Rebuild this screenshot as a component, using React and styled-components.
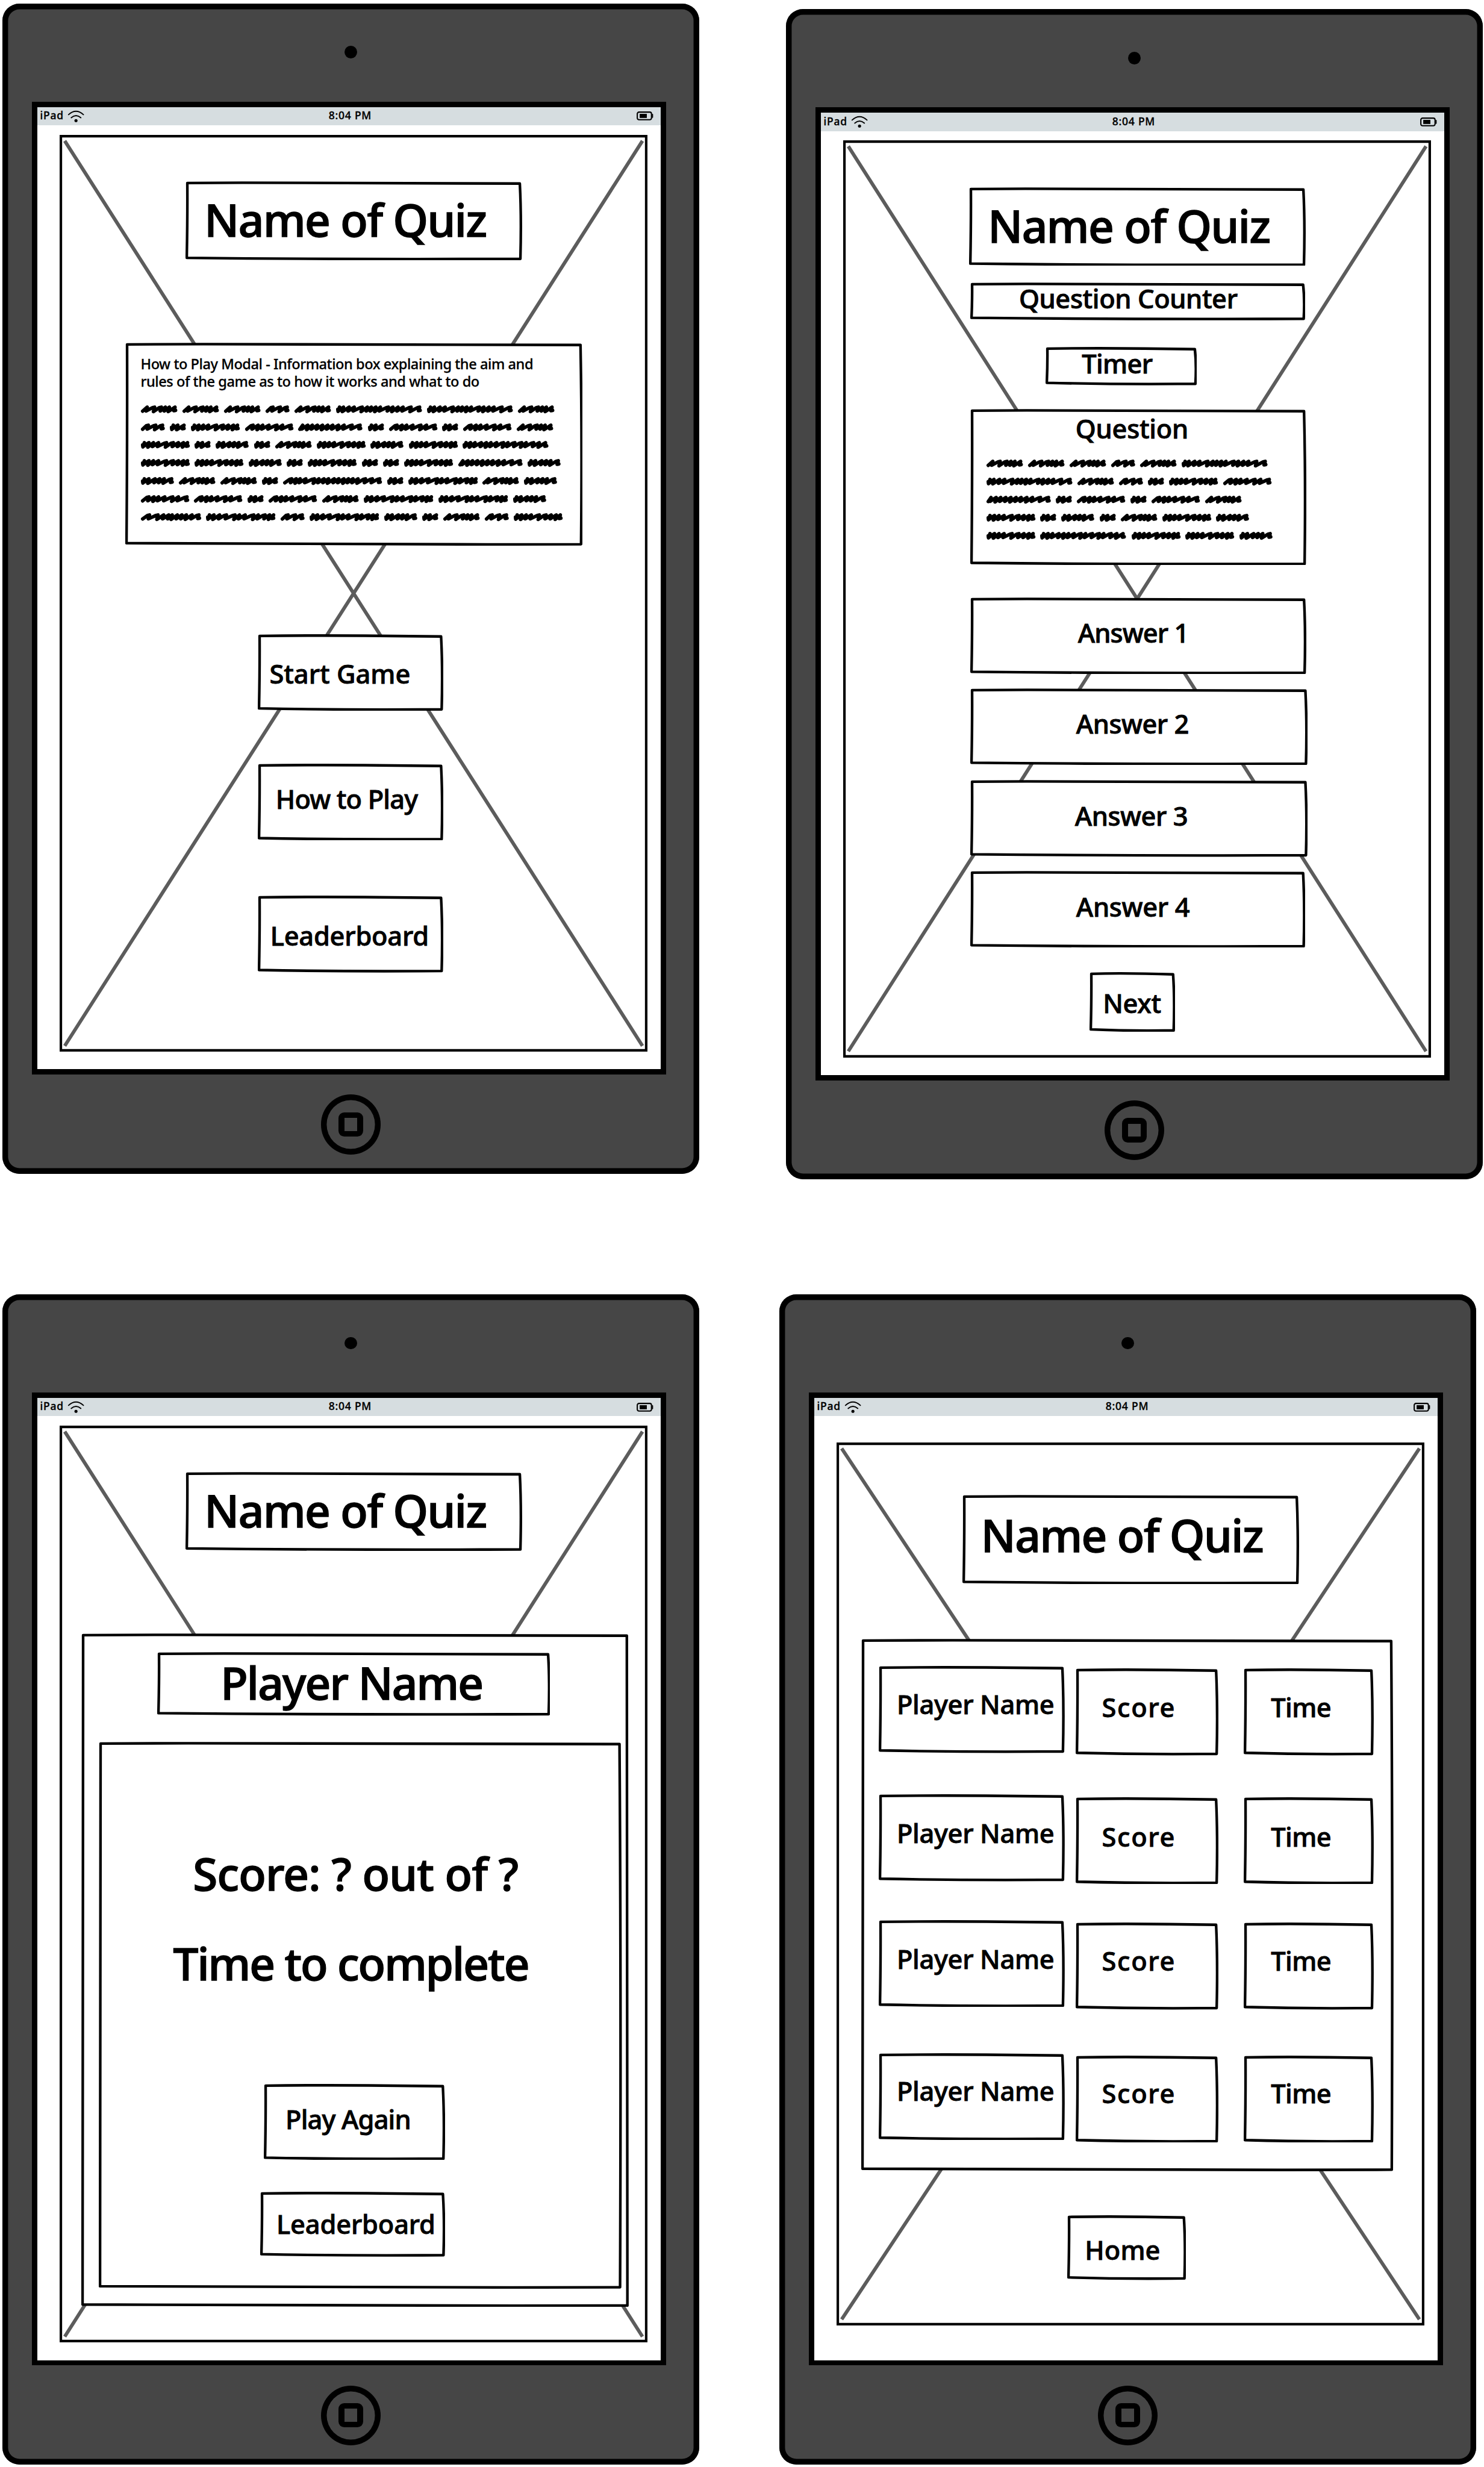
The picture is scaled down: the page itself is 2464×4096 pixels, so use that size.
import React from "react";
import styled, { createGlobalStyle } from "styled-components";

const GlobalStyle = createGlobalStyle`
  body {
    margin: 0;
    background: #fff;
  }
`;

const Page = styled.main`
  zoom: 0.94412;
  box-sizing: border-box;
  width: 2610px;
  height: 4338px;
  padding: 6px 0 0 4px;
  overflow: hidden;
  background: #fff;
  color: #000;
  font-family: "Noto Sans", "Open Sans", sans-serif;
  font-weight: 500;
`;

const DeviceRow = styled.div`
  display: flex;
  align-items: flex-start;
  gap: ${(p) => p.$gap}px;
  height: 2270px;
`;

const Device = styled.section`
  display: flex;
  flex-direction: column;
  align-items: center;
  flex: none;
  width: 1226px;
  height: 2058px;
  margin-top: ${(p) => p.$drop || 0}px;
  border-radius: 30px;
  background: #464646;
  box-shadow: inset 0 0 0 10px #000;
`;

const Camera = styled.div`
  width: 22px;
  height: 22px;
  margin-top: 75px;
  border-radius: 50%;
  background: #000;
`;

const Bezel = styled.div`
  box-sizing: border-box;
  align-self: flex-start;
  width: 1115px;
  height: 1711px;
  margin: 76px 0 0 52.2px;
  padding: 9.5px;
  background: #000;
`;

const Screen = styled.div`
  height: 100%;
  background: #fff;
`;

const StatusBar = styled.header`
  display: flex;
  align-items: flex-start;
  box-sizing: border-box;
  height: 32px;
  padding: 0 12px 0 4.7px;
  background: #d6dde0;
  font-size: 18.5px;
  line-height: 1;
`;

const Carrier = styled.div`
  display: flex;
  gap: 7px;
  width: 507.6px;
`;

const StatusText = styled.span`
  padding-top: 5.5px;
  letter-spacing: 0.85px;
  white-space: nowrap;
  -webkit-text-stroke: 0.4px #000;
`;

const WifiIcon = styled.svg`
  width: 30px;
  height: 22px;
  margin-top: 5px;
`;

const BatteryIcon = styled.svg`
  width: 30px;
  height: 16px;
  margin: 8px 0 0 auto;
`;

const HomeButton = styled.div`
  display: flex;
  align-items: center;
  justify-content: center;
  width: 105px;
  height: 105px;
  margin-top: 35px;
  border-radius: 50%;
  box-shadow: inset 0 0 0 10px #000;
`;

const HomeSquare = styled.div`
  width: 43px;
  height: 43px;
  box-sizing: border-box;
  padding: 10px;
  border-radius: 10px;
  background: #000;

  &::after {
    content: "";
    display: block;
    height: 100%;
    background: #464646;
  }
`;

const Frame = styled.div`
  position: relative;
  display: flex;
  flex-direction: column;
  align-items: flex-start;
  box-sizing: border-box;
  width: 1034px;
  height: ${(p) => p.$h}px;
  margin: ${(p) => p.$top}px 0 0 39.2px;
  box-shadow: inset 0 0 0 4.4px #000;
`;

const Backdrop = styled.svg`
  position: absolute;
  inset: 0;
  width: 100%;
  height: 100%;
`;

const BoxShell = styled.div`
  position: relative;
  flex: none;
  display: flex;
  flex-direction: column;
  align-items: flex-start;
  box-sizing: border-box;
  width: ${(p) => p.$w}px;
  height: ${(p) => p.$h}px;
  margin: ${(p) => p.$mt}px 0 0 ${(p) => p.$ml}px;
`;

const Label = styled.span`
  position: relative;
  margin: ${(p) => p.$top}px 0 0 ${(p) => p.$left}px;
  font-size: ${(p) => (p.$large ? 79 : 46)}px;
  line-height: 1;
  letter-spacing: ${(p) => p.$track || 0}px;
  white-space: pre;
  -webkit-text-stroke: 0.02em #000;
`;

const Note = styled.p`
  position: relative;
  margin: 22.8px 0 26.2px 27.4px;
  font-size: 25px;
  line-height: 30.5px;
  letter-spacing: -0.48px;
  white-space: pre;
  -webkit-text-stroke: 0.3px #000;
`;

const ScribbleBlock = styled.div`
  position: relative;
  display: flex;
  flex-direction: column;
  gap: 17.7px;
  margin: ${(p) => p.$top}px 0 0 ${(p) => p.$left}px;
`;

const ScribbleRow = styled.div`
  display: flex;
  gap: 9.1px;
  height: 14px;
`;

const ScribbleWord = styled.svg`
  flex: none;
  height: 14px;
  overflow: visible;
`;

const ScoreRow = styled.div`
  position: relative;
  display: flex;
  align-items: flex-start;
  height: 158px;
  margin: ${(p) => p.$mt}px 0 0 31px;
`;

/* Hand-drawn rectangle outline: slightly bowed sides and uneven corners. */
const outline = (w, h) =>
  `M3.2 3 C${w * 0.3} 1.8 ${w * 0.55} 1.9 ${w - 4} 4 ` +
  `Q${w - 1} ${h * 0.45} ${w - 3} ${h - 2.6} ` +
  `C${w * 0.7} ${h - 2.2} ${w * 0.5} ${h - 1.2} 2.2 ${h - 4.4} ` +
  `Q3.6 ${h * 0.45} 3.2 3 Z`;

function SketchBox({ w, h, mt = 0, ml = 0, children }) {
  return (
    <BoxShell $w={w} $h={h} $mt={mt} $ml={ml}>
      <Backdrop viewBox={`0 0 ${w} ${h}`}>
        <path d={outline(w, h)} fill="#fff" stroke="#000" strokeWidth="4.6" strokeLinejoin="round" />
      </Backdrop>
      {children}
    </BoxShell>
  );
}

function TextBox({ text, px, py, large, track, ...box }) {
  return (
    <SketchBox {...box}>
      <Label $left={px} $top={py} $large={large} $track={track}>
        {text}
      </Label>
    </SketchBox>
  );
}

/* Scribbled words: total width and the x of every upward stroke. */
const WORDS = {
  A: [64, [11, 24, 36, 43, 50, 60]],
  B: [42, [13, 26, 38]],
  C: [151, [6, 13, 23, 32, 46, 55, 62, 70, 78, 92, 100, 109, 118, 132, 147]],
  D: [28, [6, 14, 25]],
  E: [86, [6, 14, 22, 31, 45, 57, 66, 75, 82]],
  F: [85, [14, 23, 31, 42, 56, 66, 81]],
  G: [113, [8, 17, 25, 34, 43, 52, 61, 71, 81, 95, 109]],
  H: [58, [6, 14, 25, 33, 41, 54]],
  I: [174, [15, 23, 30, 40, 55, 63, 72, 80, 90, 98, 107, 115, 123, 132, 145, 157, 170]],
  J: [122, [6, 14, 24, 36, 51, 59, 69, 84, 92, 104, 112, 119]],
  K: [106, [15, 30, 40, 49, 55, 64, 72, 80, 90, 102]],
  L: [151, [6, 14, 22, 33, 42, 50, 60, 72, 80, 92, 104, 112, 125, 135, 146]],
};

function Scribble({ word }) {
  const [width, peaks] = WORDS[word];
  let d = peaks[0] < 8 ? "M3 7 L3.4 10.6" : "M3 10.2";
  peaks.forEach((x, i) => {
    const wide = x - (i ? peaks[i - 1] : 0) > 11;
    const low = i % 3 === 1 ? 11 : 10;
    if (wide) d += ` L${x - 3.5} 4`;
    d += ` L${x} 3.2`;
    if (i < peaks.length - 1) d += ` L${x - 2} ${low}`;
  });
  d += ` L${width - 6} 9.4 L${width - 3} 8.8`;
  return (
    <ScribbleWord width={width} viewBox={`0 0 ${width} 14`}>
      <path d={d} fill="none" stroke="#000" strokeWidth="6.2" strokeLinecap="round" strokeLinejoin="round" />
    </ScribbleWord>
  );
}

function Scribbles({ rows, top, left }) {
  return (
    <ScribbleBlock $top={top} $left={left}>
      {rows.map((row) => (
        <ScribbleRow key={row}>
          {[...row].map((word, i) => (
            <Scribble key={i} word={word} />
          ))}
        </ScribbleRow>
      ))}
    </ScribbleBlock>
  );
}

function Tablet({ drop, frameTop = 16.5, frameHeight = 1612.5, children }) {
  return (
    <Device $drop={drop}>
      <Camera />
      <Bezel>
        <Screen>
          <StatusBar>
            <Carrier>
              <StatusText>iPad</StatusText>
              <WifiIcon viewBox="0 0 30 22" fill="none" stroke="#000" strokeWidth="2" strokeLinecap="round">
                <path d="M1.9 7.8 Q15 -4.2 28.1 7.8" />
                <path d="M6.6 13.2 Q15 6 23.6 13.2" />
                <circle cx="15" cy="18.2" r="2.7" fill="#000" stroke="none" />
              </WifiIcon>
            </Carrier>
            <StatusText>8:04 PM</StatusText>
            <BatteryIcon viewBox="0 0 30 16">
              <rect x="1.2" y="1.2" width="25" height="13.4" rx="3" fill="none" stroke="#000" strokeWidth="2.2" />
              <rect x="5.4" y="4.3" width="12.6" height="7.2" fill="#000" />
              <path d="M28 5.2 V10.4" stroke="#000" strokeWidth="2" strokeLinecap="round" />
            </BatteryIcon>
          </StatusBar>
          <Frame $top={frameTop} $h={frameHeight}>
            <Backdrop viewBox={`0 0 1034 ${frameHeight}`}>
              <path
                d={`M9 10.5 L1025 ${frameHeight - 10.5} M1025 10.5 L9 ${frameHeight - 10.5}`}
                stroke="#5c5c5c"
                strokeWidth="6.2"
              />
            </Backdrop>
            {children}
          </Frame>
        </Screen>
      </Bezel>
      <HomeButton>
        <HomeSquare />
      </HomeButton>
    </Device>
  );
}

const quizTitle = { text: "Name of Quiz", large: true, track: -1.55, ml: 221, w: 592 };

const answers = [
  { text: "Answer 1", track: -1, mt: 56.6, w: 591, px: 189.4, py: 39.7 },
  { text: "Answer 2", track: -0.55, mt: 25, w: 593.4, px: 186.2, py: 39.3 },
  { text: "Answer 3", track: -0.5, mt: 26.6, w: 593.4, px: 184, py: 40.4 },
  { text: "Answer 4", track: -0.35, mt: 24.6, w: 589.4, px: 186.2, py: 39.9 },
];

const scoreRows = [
  { mt: 47.7, name: 44.4, value: 45.7 },
  { mt: 68, name: 45.2, value: 46.7 },
  { mt: 63, name: 45.3, value: 44.2 },
  { mt: 75.8, name: 43.6, value: 43.6 },
];

export default function App() {
  return (
    <>
      <GlobalStyle />
      <Page>
        <DeviceRow $gap={152}>
          <Tablet>
            <TextBox {...quizTitle} mt={81.5} h={139} px={33.5} py={28} />
            <SketchBox ml={115} mt={145} w={804.6} h={357}>
              <Note>
                {"How to Play Modal - Information box explaining the aim and\nrules of the game as to how it works and what to do"}
              </Note>
              <Scribbles
                top={0}
                left={27.5}
                rows={["AAABACCA", "BDEFGDFDFA", "EDHDAEHEL", "EEHDEDDEGH", "HAADIDJAH", "FFDFAJJH", "KJBJHDABE"]}
              />
            </SketchBox>
            <TextBox text="Start Game" ml={348} mt={155.6} w={326.4} h={134.8} px={21} py={47.1} />
            <TextBox text="How to Play" track={-0.9} ml={348} mt={92.9} w={326.4} h={135.2} px={32} py={39.8} />
            <TextBox text="Leaderboard" track={-0.25} ml={348} mt={97} w={326.4} h={135.2} px={22.4} py={47.7} />
          </Tablet>

          <Tablet drop={10}>
            <TextBox {...quizTitle} mt={82} h={138.6} px={33.5} py={28} />
            <TextBox text="Question Counter" track={-0.42} ml={223.5} mt={29.4} w={589.4} h={66.5} px={85.7} py={5} />
            <TextBox text="Timer" track={-0.7} ml={355.5} mt={47.2} w={266.6} h={67.5} px={64.2} py={5.5} />
            <SketchBox ml={223.5} mt={40.7} w={591} h={275}>
              <Label $left={185.2} $top={11.6} $track={-0.3}>
                Question
              </Label>
              <Scribbles top={32} left={28.2} rows={["AAABAC", "CABDEF", "GDFDFA", "EDHDAEH", "ELEEH"]} />
            </SketchBox>
            {answers.map((answer) => (
              <TextBox key={answer.text} {...answer} ml={223.5} h={135} />
            ))}
            <TextBox text="Next" track={-0.3} ml={432.7} mt={43} w={151} h={105.2} px={24} py={31.5} />
          </Tablet>
        </DeviceRow>

        <DeviceRow $gap={140.4}>
          <Tablet>
            <TextBox {...quizTitle} mt={81.5} h={138.8} px={33.5} py={28} />
            <SketchBox ml={37.8} mt={145.4} w={963.4} h={1184.6}>
              <TextBox text="Player Name" large track={-1.95} ml={133.4} mt={33.1} w={691.5} h={111.8} px={111.8} py={13.5} />
              <SketchBox ml={31.4} mt={45.5} w={919.8} h={961.8}>
                <Label $large $left={165.2} $top={192.2} $track={-0.85}>
                  Score: ? out of ?
                </Label>
                <Label $large $left={130.4} $top={79} $track={-2.1}>
                  Time to complete
                </Label>
                <TextBox text="Play Again" track={-0.9} ml={289.8} mt={172.6} w={318.9} h={134} px={38.2} py={39.3} />
                <TextBox text="Leaderboard" track={-0.2} ml={283.3} mt={55.6} w={325.4} h={114.2} px={28.9} py={33.5} />
              </SketchBox>
            </SketchBox>
          </Tablet>

          <Tablet frameTop={46.7} frameHeight={1552.6}>
            <TextBox {...quizTitle} mt={91.3} h={157.3} px={33} py={31.7} />
            <SketchBox ml={43.2} mt={96.4} w={936} h={936.2}>
              {scoreRows.map((row) => (
                <ScoreRow key={row.mt} $mt={row.mt}>
                  <TextBox text="Player Name" track={-0.35} w={327} h={153} px={31.6} py={row.name} />
                  <TextBox text="Score" track={1.8} mt={4.5} ml={19.4} w={251} h={153} px={46} py={row.value} />
                  <TextBox text="Time" track={-0.6} mt={4.5} ml={44.8} w={228.6} h={153} px={47.5} py={row.value} />
                </ScoreRow>
              ))}
            </SketchBox>
            <TextBox text="Home" track={0.1} ml={405.2} mt={77.9} w={209.2} h={113.7} px={31.4} py={37.3} />
          </Tablet>
        </DeviceRow>
      </Page>
    </>
  );
}
